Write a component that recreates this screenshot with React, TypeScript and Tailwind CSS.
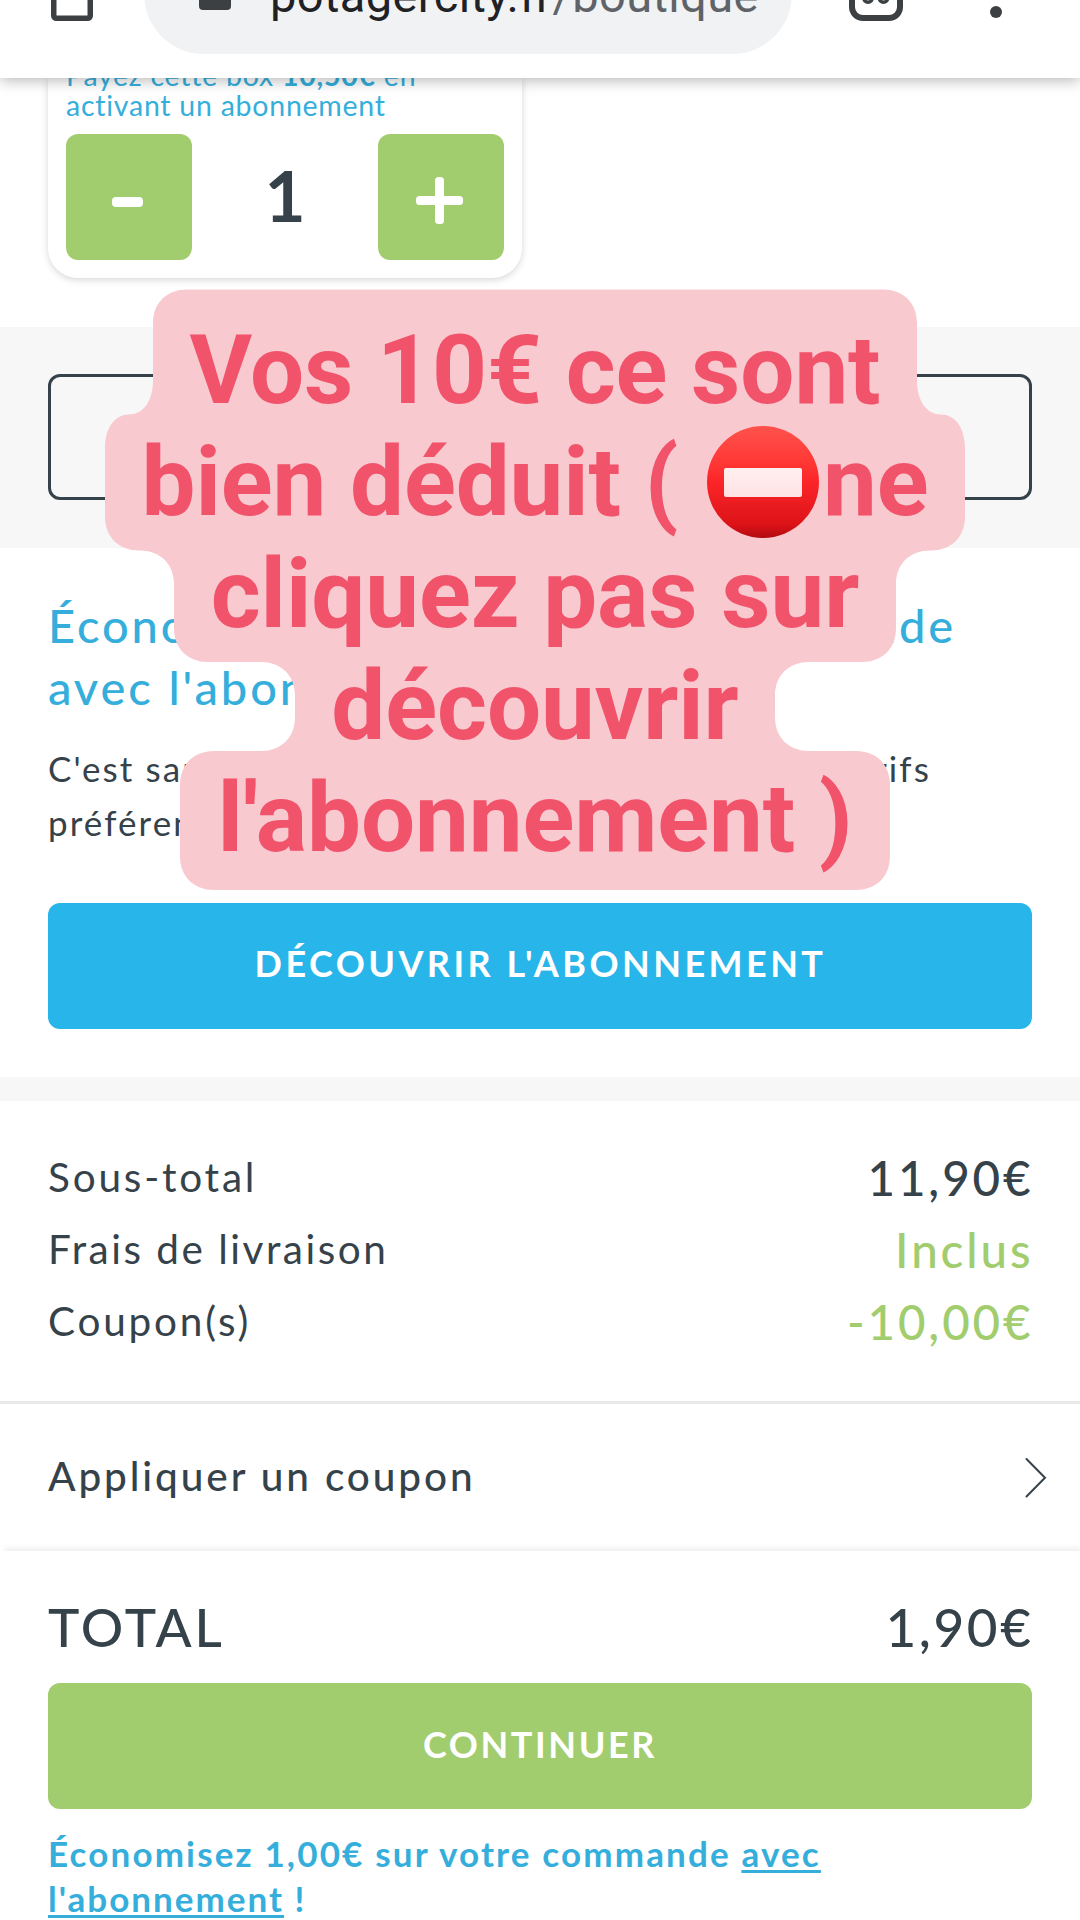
import React from "react";

const CX = 535;

/** Half-width and vertical extent of each row of the caption bubble. */
const bubbleRows = [
  { half: 382, top: 289.5, bottom: 414.5 },
  { half: 430, top: 414.5, bottom: 550.5 },
  { half: 361, top: 550.5, bottom: 662 },
  { half: 240, top: 662, bottom: 751 },
  { half: 355, top: 751, bottom: 890 },
];

/** Rounded outline that follows the rows, mirrored around the centre line. */
function bubblePath() {
  const R = 34;
  const pts: [number, number][] = [];
  bubbleRows.forEach((r) => pts.push([r.half, r.top], [r.half, r.bottom]));
  const right = pts.map(([h, y]) => [CX + h, y]);
  const left = pts.map(([h, y]) => [CX - h, y]).reverse();
  const all = [...right, ...left];
  const n = all.length;
  let d = "";
  for (let i = 0; i < n; i++) {
    const [px, py] = all[(i + n - 1) % n];
    const [x, y] = all[i];
    const [nx, ny] = all[(i + 1) % n];
    const l1 = Math.hypot(x - px, y - py);
    const l2 = Math.hypot(nx - x, ny - y);
    const a = Math.min(R, l1 / 2);
    const b = Math.min(R, l2 / 2);
    const sx = x - ((x - px) / l1) * a;
    const sy = y - ((y - py) / l1) * a;
    const ex = x + ((nx - x) / l2) * b;
    const ey = y + ((ny - y) / l2) * b;
    const k = 0.6;
    d += `${i ? "L" : "M"}${sx} ${sy}C${sx + (x - sx) * k} ${sy + (y - sy) * k} ${ex + (x - ex) * k} ${ey + (y - ey) * k} ${ex} ${ey}`;
  }
  return d + "Z";
}

function NoEntry() {
  return (
    <svg width="112" height="112" viewBox="0 0 112 112" className="ml-[5px] mr-[4px] shrink-0">
      <defs>
        <linearGradient id="disc" x1="0" y1="0" x2="0" y2="1">
          <stop offset="0" stopColor="#ff524d" />
          <stop offset="0.3" stopColor="#ff3a37" />
          <stop offset="0.5" stopColor="#fb2528" />
          <stop offset="0.88" stopColor="#dc1318" />
          <stop offset="1" stopColor="#b00b10" />
        </linearGradient>
        <linearGradient id="bar" x1="0" y1="0" x2="0" y2="1">
          <stop offset="0" stopColor="#fff0f0" />
          <stop offset="1" stopColor="#ffe1e3" />
        </linearGradient>
      </defs>
      <circle cx="56" cy="56" r="56" fill="url(#disc)" />
      <rect x="17" y="42" width="78" height="29" rx="2" fill="url(#bar)" />
    </svg>
  );
}

function Caption() {
  return (
    <div className="pointer-events-none absolute inset-0 z-20">
      <svg width="1080" height="1920" className="absolute inset-0">
        <path d={bubblePath()} fill="#f9c9d0" />
      </svg>
      <div className="absolute left-0 top-[314px] flex w-[1070px] flex-col items-center whitespace-pre font-['Roboto',sans-serif] text-[96px] font-bold leading-[112px] tracking-[-0.1px] text-[#f1536a]">
        <div>Vos 10€ ce sont</div>
        <div className="flex h-[112px] items-center">
          <span>{"bien déduit ( "}</span>
          <NoEntry />
          <span>ne</span>
        </div>
        <div>cliquez pas sur</div>
        <div>découvrir</div>
        <div>l'abonnement )</div>
      </div>
    </div>
  );
}

function BrowserBar() {
  return (
    <header className="relative z-10 h-[78px] shrink-0 bg-white shadow-[0_2px_14px_rgba(0,0,0,0.3)]">
      <div className="flex h-full items-end overflow-hidden">
        <svg width="42" height="40" viewBox="0 0 42 40" className="mb-[57px] ml-[51px] shrink-0">
          <rect x="2.75" y="-10" width="36.5" height="47.2" rx="2.5" fill="none" stroke="#3c4043" strokeWidth="5.5" />
        </svg>
        <div className="mb-[24.5px] ml-[51px] flex h-[120px] w-[648px] shrink-0 items-center rounded-full bg-[#f1f2f4] pl-[55px] pt-[4px]">
          <div className="mb-[2px] h-[30px] w-[32px] shrink-0 rounded-[4px] bg-[#3c4043]" />
          <div className="ml-[39px] whitespace-nowrap font-['Roboto',sans-serif] text-[47px] leading-[56px] tracking-[0.4px] text-[#5f6368]">
            <span className="text-[#202124]">potagercity.fr</span>/boutique
          </div>
        </div>
        <svg width="54" height="54" viewBox="0 0 54 54" className="mb-[57px] ml-[56.5px] shrink-0">
          <rect x="3" y="3" width="48" height="48" rx="11" fill="none" stroke="#3c4043" strokeWidth="6" />
          <circle cx="19" cy="31" r="4.2" fill="none" stroke="#3c4043" strokeWidth="3.5" />
          <circle cx="34.5" cy="31" r="4.2" fill="none" stroke="#3c4043" strokeWidth="3.5" />
        </svg>
        <div className="mb-[60px] ml-[87px] size-[12px] shrink-0 rounded-full bg-[#3c4043]" />
      </div>
    </header>
  );
}

function StepButton({ children }: { children: React.ReactNode }) {
  return (
    <button className="flex size-[126px] items-center justify-center rounded-[12px] bg-[#a2cd6f]">
      <svg width="56" height="56" viewBox="-4 -4 56 56" fill="#fff">
        {children}
      </svg>
    </button>
  );
}

function ProductCard() {
  return (
    <section className="h-[249px] shrink-0 pl-[48px]">
      <div className="h-[199.5px] w-[474px] rounded-b-[30px] bg-white px-[18px] shadow-[0_2px_7px_rgba(0,0,0,0.16)]">
        <div className="relative -top-[18px] h-[56px] whitespace-nowrap text-[28.5px] leading-[30px] tracking-[0.75px] text-[#35aedb]">
          <div>
            Payez cette box <b>10,50€</b> en
          </div>
          <div>activant un abonnement</div>
        </div>
        <div className="flex items-center justify-between">
          <StepButton>
            <rect x="7" y="24" width="31" height="10" rx="4" />
          </StepButton>
          <span className="mt-[-4px] text-[71px] font-bold leading-[80px]">1</span>
          <StepButton>
            <rect x="-1" y="23" width="47" height="9" rx="3.5" />
            <rect x="18" y="4" width="9" height="47" rx="3.5" />
          </StepButton>
        </div>
      </div>
    </section>
  );
}

function SummaryRow({ label, value, green, tight }: { label: string; value: string; green?: boolean; tight?: boolean }) {
  return (
    <div className="flex h-[72px] items-center justify-between">
      <span className={`text-[40.5px] ${tight ? "tracking-[2.5px]" : "tracking-[2.8px]"}`}>{label}</span>
      <span className={`-mr-[1.5px] pt-px text-[47.5px] font-medium tracking-[2.9px] ${green ? "text-[#a2cd6f]" : ""}`}>{value}</span>
    </div>
  );
}

export default function App() {
  return (
    <div className="relative flex h-[1920px] w-[1080px] flex-col overflow-hidden bg-white font-['Lato',sans-serif] text-[#36424a]">
      <BrowserBar />
      <ProductCard />

      <section className="h-[220.5px] shrink-0 bg-[#f7f7f7] px-[48px] pt-[47px]">
        <div className="h-[126px] rounded-[12px] border-3 border-[#36424a]" />
      </section>

      <section className="h-[529.5px] shrink-0 px-[48px] pt-[46.5px]">
        <h2 className="w-[908px] text-[47px] font-medium leading-[62px] tracking-[2.9px] text-[#35aedb]">
          <span className="flex justify-between">
            <span>Économisez sur votre</span>
            <span>commande</span>
          </span>
          <span>avec l'abonnement</span>
        </h2>
        <p className="mt-[22.5px] w-[883px] text-[35px] leading-[54px] tracking-[2.1px]">
          <span className="flex justify-between">
            <span>C'est sans engagement avec</span>
            <span>des tarifs</span>
          </span>
          <span>préférentiels</span>
        </p>
        <button className="mt-[54px] flex h-[126px] w-full items-center justify-center rounded-[12px] bg-[#27b5ea] pb-[5px] pl-[1px] text-[36px] font-bold tracking-[3.45px] text-white">
          DÉCOUVRIR L'ABONNEMENT
        </button>
      </section>

      <div className="h-[24px] shrink-0 bg-[#f7f7f7]" />

      <section className="h-[303px] shrink-0 border-b-3 border-[#e9e9e9] px-[48px] pt-[40px]">
        <SummaryRow label="Sous-total" value="11,90€" />
        <SummaryRow label="Frais de livraison" value="Inclus" green tight />
        <SummaryRow label="Coupon(s)" value="-10,00€" green />
      </section>

      <section className="flex h-[147px] shrink-0 items-center justify-between pb-[3px] pl-[48px] pr-[33.5px]">
        <span className="text-[40.5px] font-medium tracking-[2.9px]">Appliquer un coupon</span>
        <svg width="23" height="42" viewBox="0 0 23 42" className="mt-[4px]" fill="none" stroke="#36424a" strokeWidth="2" strokeLinecap="round">
          <path d="M2.5 2L21 20.8L2.5 39.5" />
        </svg>
      </section>

      <footer className="grow bg-white px-[48px] pt-[18px] shadow-[3px_-5px_6px_-2px_rgba(0,0,0,0.07)]">
        <div className="flex h-[114px] items-center justify-between pt-[2px] text-[53px] font-medium">
          <span className="tracking-[3px]">TOTAL</span>
          <span className="-mr-[1.5px] tracking-[2.6px]">1,90€</span>
        </div>
        <button className="flex h-[126px] w-full items-center justify-center rounded-[12px] bg-[#a2cd6f] pb-[5px] text-[36px] font-bold tracking-[2.6px] text-white">
          CONTINUER
        </button>
        <p className="mt-[22px] text-[35px] font-bold leading-[45px] tracking-[2.15px] text-[#35aedb]">
          Économisez 1,00€ sur votre commande{" "}
          <span className="underline decoration-3 underline-offset-3">avec</span>
          <br />
          <span className="tracking-[2px]">
            <span className="underline decoration-3 underline-offset-3">l'abonnement</span> !
          </span>
        </p>
      </footer>

      <Caption />
    </div>
  );
}
